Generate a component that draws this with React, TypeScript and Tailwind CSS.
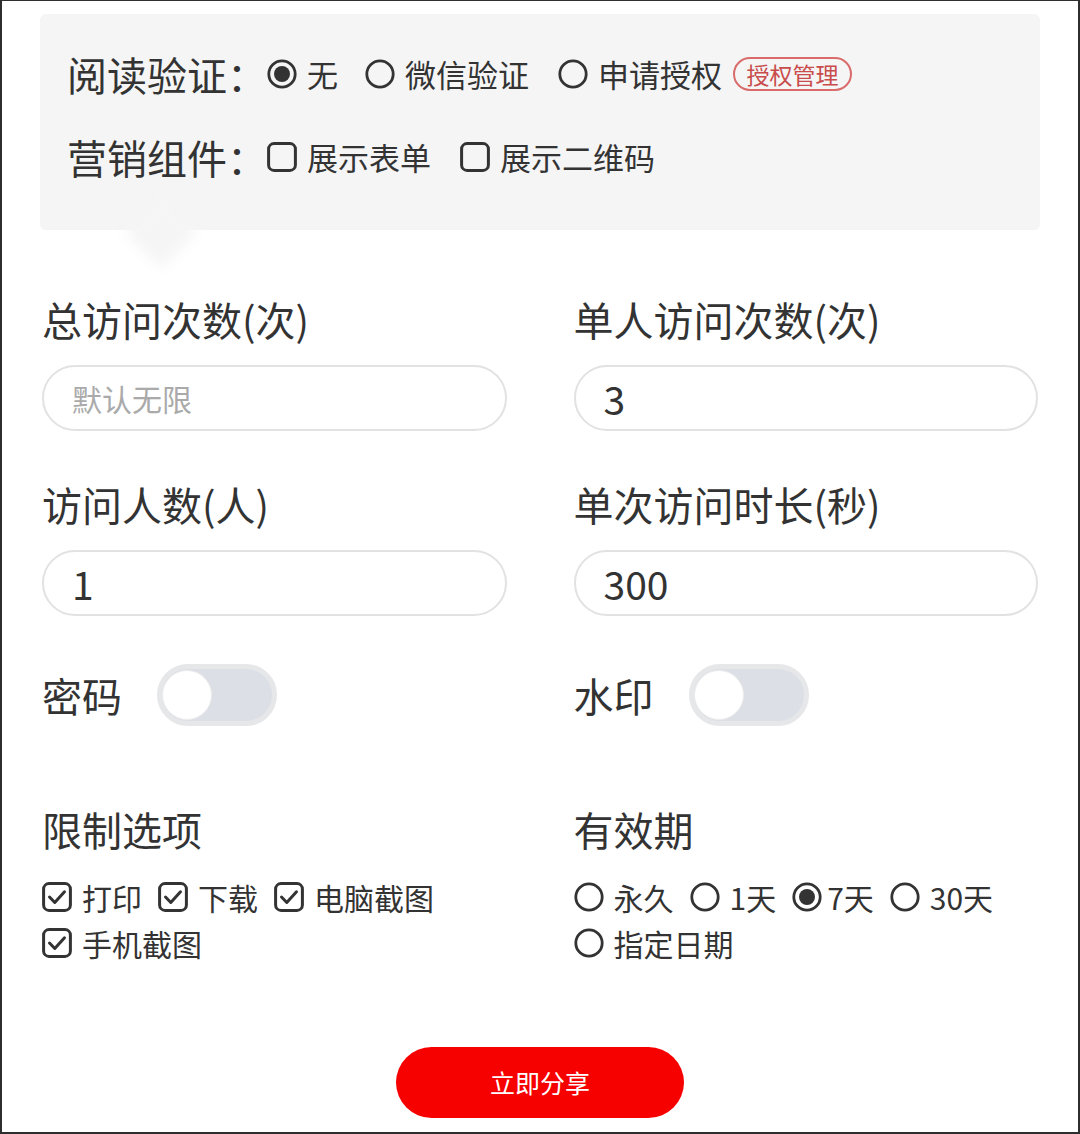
import React from "react";

const FONT = { fontFamily: '"Noto Sans CJK SC", "Noto Sans", sans-serif' };

function Radio({ checked }: { checked?: boolean }) {
  return (
    <svg width="30" height="30" viewBox="0 0 30 30" className="shrink-0">
      <circle cx="15" cy="15" r="13.2" fill="none" stroke="#333" strokeWidth="2.8" />
      {checked && <circle cx="15" cy="15" r="8" fill="#333" />}
    </svg>
  );
}

function Check({ checked }: { checked?: boolean }) {
  return (
    <svg width="30" height="30" viewBox="0 0 30 30" className="shrink-0">
      <rect x="1.6" y="1.6" width="26.8" height="26.8" rx="5.5" fill="none" stroke="#333" strokeWidth="3" />
      {checked && (
        <path d="M7.5 15 L12.8 20.5 L22.5 9.8" fill="none" stroke="#333" strokeWidth="3" strokeLinecap="round" strokeLinejoin="round" />
      )}
    </svg>
  );
}

function Toggle() {
  return (
    <div className="flex h-[62px] w-[120px] items-center rounded-full border-[5px] border-[#e6e7e9] bg-[#dcdfe6]">
      <div className="h-[50px] w-[50px] rounded-full border border-[#ececec] bg-white" />
    </div>
  );
}

function Field({ label, value, placeholder }: { label: string; value?: string; placeholder?: string }) {
  return (
    <div className="flex flex-col">
      <div className="h-[50px] text-[40px] leading-[50px] text-[#333]">{label}</div>
      <div className="mt-[21px] flex h-[66px] items-center rounded-full border-2 border-[#e2e2e2] pl-[28px]">
        {value ? (
          <span className="text-[39px] text-[#333]">{value}</span>
        ) : (
          <span className="text-[30px] text-[#aaaaaa]">{placeholder}</span>
        )}
      </div>
    </div>
  );
}

export default function App() {
  return (
    <div
      style={FONT}
      className="relative h-[1134px] w-[1080px] border-b-2 border-l-2 border-r-2 border-t border-[#2e2e2e] bg-white"
    >
      <div className="px-[38px] pt-[13px]">
        {/* top panel */}
        <div className="relative h-[216px] rounded-md bg-[#f5f5f5] px-[27px] pt-[35px]">
          <div className="absolute left-[96px] top-[194px] h-[50px] w-[50px] rotate-45 bg-[#f5f5f5] blur-[6px]" />
          <div className="relative flex h-[50px] items-center text-[31px] text-[#333]">
            <span className="text-[40px]">阅读验证：</span>
            <span className="flex items-center gap-[10px]">
              <Radio checked />
              <span>无</span>
            </span>
            <span className="ml-[27px] flex items-center gap-[10px]">
              <Radio />
              <span>微信验证</span>
            </span>
            <span className="ml-[29px] flex items-center gap-[10px]">
              <Radio />
              <span>申请授权</span>
            </span>
            <span className="ml-[11px] flex h-[34px] w-[119px] items-center justify-center rounded-full border-2 border-[#d96b6b] text-[23px] text-[#c94c4c]">
              授权管理
            </span>
          </div>
          <div className="relative mt-[33px] flex h-[50px] items-center text-[31px] text-[#333]">
            <span className="text-[40px]">营销组件：</span>
            <span className="flex items-center gap-[10px]">
              <Check />
              <span>展示表单</span>
            </span>
            <span className="ml-[29px] flex items-center gap-[10px]">
              <Check />
              <span>展示二维码</span>
            </span>
          </div>
        </div>

        {/* form grid */}
        <div className="mt-[64px] grid grid-cols-2 gap-x-[67px] px-[2px]">
          <Field label="总访问次数(次)" placeholder="默认无限" />
          <Field label="单人访问次数(次)" value="3" />
          <div className="mt-[48px]">
            <Field label="访问人数(人)" value="1" />
          </div>
          <div className="mt-[48px]">
            <Field label="单次访问时长(秒)" value="300" />
          </div>

          <div className="mt-[48px] flex items-center gap-[35px]">
            <span className="text-[40px] text-[#333]">密码</span>
            <Toggle />
          </div>
          <div className="mt-[48px] flex items-center gap-[35px]">
            <span className="text-[40px] text-[#333]">水印</span>
            <Toggle />
          </div>

          <div className="mt-[78px]">
            <div className="h-[50px] text-[40px] leading-[50px] text-[#333]">限制选项</div>
            <div className="mt-[20px] flex flex-wrap text-[30px] text-[#333]">
              {["打印", "下载", "电脑截图", "手机截图"].map((t) => (
                <span key={t} className="mr-[16px] flex h-[46px] items-center gap-[10px]">
                  <Check checked />
                  <span>{t}</span>
                </span>
              ))}
            </div>
          </div>
          <div className="mt-[78px]">
            <div className="h-[50px] text-[40px] leading-[50px] text-[#333]">有效期</div>
            <div className="mt-[20px] flex flex-wrap text-[30px] text-[#333]">
              {[
                { t: "永久", c: false },
                { t: "1天", c: false },
                { t: "7天", c: true },
                { t: "30天", c: false },
                { t: "指定日期", c: false },
              ].map((o) => (
                <span key={o.t} className={"mr-[16px] flex h-[46px] items-center " + (o.c ? "gap-[5px]" : "gap-[10px]")}>
                  <Radio checked={o.c} />
                  <span>{o.t}</span>
                </span>
              ))}
            </div>
          </div>
        </div>

        <div className="mt-[81px] flex justify-center">
          <button className="h-[71px] w-[288px] rounded-full bg-[#f70000] text-[25px] text-white">立即分享</button>
        </div>
      </div>
    </div>
  );
}
